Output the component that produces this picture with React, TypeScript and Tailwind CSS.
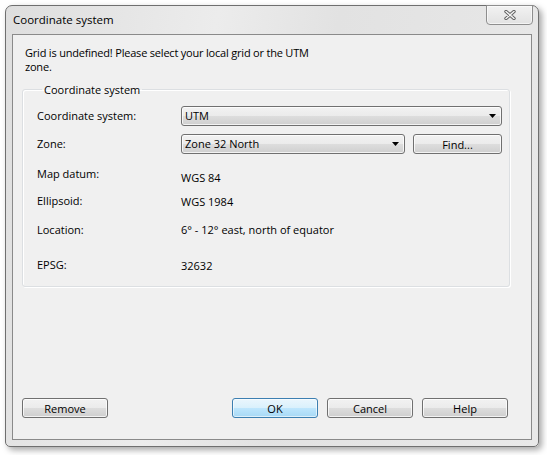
import type { ReactNode } from 'react';

const btnBase =
  'h-[20px] w-[86px] rounded-[3px] border flex items-center justify-center text-[11px] leading-none text-black';
const btnFace =
  'bg-[linear-gradient(#f2f2f2_0%,#ebebeb_50%,#dddddd_51%,#cfcfcf_100%)] shadow-[inset_0_0_0_1px_rgba(255,255,255,0.75)]';
const btnGray = `border-[#707070] ${btnFace}`;
const btnBlue =
  'border-[#3c7fb1] bg-[linear-gradient(#eaf6fd_0%,#d9f0fc_50%,#bee6fd_51%,#a7d9f5_100%)] shadow-[inset_0_0_0_1px_rgba(255,255,255,0.6)]';

function Button({ children, primary = false }: { children: ReactNode; primary?: boolean }) {
  return <button className={`${btnBase} ${primary ? btnBlue : btnGray}`}>{children}</button>;
}

function Arrow() {
  return (
    <svg width="7" height="4" viewBox="0 0 7 4" className="shrink-0">
      <path d="M0 0h7L3.5 4z" fill="#000" />
    </svg>
  );
}

function Combo({ value, className = '' }: { value: string; className?: string }) {
  return (
    <div
      className={`h-[20px] rounded-[3px] border border-[#707070] pl-[3px] pr-[5px] flex items-center justify-between text-[11px] text-black ${btnFace} ${className}`}
    >
      <span>{value}</span>
      <Arrow />
    </div>
  );
}

function CloseGlyph() {
  return (
    <svg width="12" height="10" viewBox="0 0 12 10">
      <path d="M2 1.5l8 7M10 1.5l-8 7" stroke="#5f5f5f" strokeWidth="3.4" strokeLinecap="round" />
      <path d="M2 1.5l8 7M10 1.5l-8 7" stroke="#f4f4f4" strokeWidth="1.5" strokeLinecap="round" />
    </svg>
  );
}

export default function App() {
  return (
    <div className="w-[547px] h-[455px] bg-white pt-[5px] pl-[5px] font-['Open_Sans','Noto_Sans',sans-serif] text-black">
      <div className="w-[534px] h-[442px] rounded-t-[7px] rounded-b-[5px] border border-[#6f6f6f] bg-[linear-gradient(100deg,#dedede_0%,#ececec_35%,#e2e2e2_55%,#e9e9e9_100%)] shadow-[3px_3px_6px_rgba(0,0,0,0.35)] flex flex-col">
        {/* title bar */}
        <div className="h-[28px] shrink-0 flex items-start justify-between pl-[7px] pr-[5px]">
          <span className="mt-[6px] text-[11.5px] leading-[16px]">Coordinate system</span>
          <div className="w-[47px] h-[20px] -mt-px rounded-b-[4px] border border-[#8e8e8e] bg-[linear-gradient(#f2f2f2,#e2e2e2)] shadow-[inset_0_0_0_1px_rgba(255,255,255,0.6)] flex items-center justify-center">
            <CloseGlyph />
          </div>
        </div>

        {/* client area */}
        <div className="flex-1 mx-[6px] mb-[6px] border border-[#8a8a8a] bg-[#f0f0f0] flex flex-col">
          <p className="mt-[11px] ml-[12px] text-[11px] leading-[14px] tracking-[-0.2px]">
            Grid is undefined! Please select your local grid or the UTM
            <br />
            zone.
          </p>

          <fieldset className="mt-[8px] ml-[9px] mr-[21px] rounded-[3px] border border-[#dcdfe2] shadow-[inset_1px_1px_0_#fff,1px_1px_0_#fff] pl-[14px] pr-[7px] pb-[13px]">
            <legend className="ml-[5px] px-[2px] text-[11px] leading-[15px]">Coordinate system</legend>

            <div className="mt-[9px] flex items-center h-[20px] text-[11px]">
              <span className="w-[144px] shrink-0">Coordinate system:</span>
              <Combo value="UTM" className="flex-1" />
            </div>

            <div className="mt-[8px] flex items-center h-[20px] text-[11px]">
              <span className="w-[144px] shrink-0">Zone:</span>
              <Combo value="Zone 32 North" className="w-[224px]" />
              <div className="ml-[8px] flex-1 flex">
                <button className={`${btnBase} ${btnGray} w-full`}>Find...</button>
              </div>
            </div>

            <div className="mt-[12px] flex items-start text-[11px] leading-[15px]">
              <span className="w-[144px] shrink-0">Map datum:</span>
              <span className="pt-[4px]">WGS 84</span>
            </div>

            <div className="mt-[8px] flex items-start text-[11px] leading-[15px]">
              <span className="w-[144px] shrink-0">Ellipsoid:</span>
              <span className="pt-[1px]">WGS 1984</span>
            </div>

            <div className="mt-[13px] flex items-start text-[11px] leading-[15px]">
              <span className="w-[144px] shrink-0">Location:</span>
              <span>6° - 12° east, north of equator</span>
            </div>

            <div className="mt-[20px] flex items-start text-[11px] leading-[15px]">
              <span className="w-[144px] shrink-0">EPSG:</span>
              <span className="pt-[1px]">32632</span>
            </div>
          </fieldset>

          <div className="flex-1" />

          <div className="mb-[21px] pl-[9px] pr-[23px] flex items-center">
            <Button>Remove</Button>
            <div className="flex-1" />
            <div className="flex gap-[9px]">
              <Button primary>OK</Button>
              <Button>Cancel</Button>
              <Button>Help</Button>
            </div>
          </div>
        </div>
      </div>
    </div>
  );
}
